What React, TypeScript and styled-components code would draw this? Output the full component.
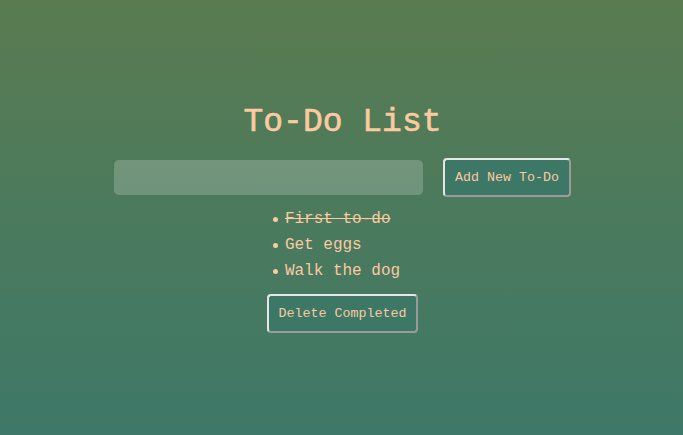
import React, { useState } from "react";
import styled, { createGlobalStyle } from "styled-components";

const MONO = `"Liberation Mono", "Courier New", monospace`;

const Global = createGlobalStyle`
  html, body { margin: 0; padding: 0; height: 100%; }
  body {
    background: linear-gradient(to bottom, #5a7b50 0%, #4b7a5d 50%, #3e7868 100%);
    font-family: ${MONO};
    color: #fbcaa0;
  }
  #root { min-height: 100%; }
`;

const Page = styled.div`
  display: flex;
  flex-direction: column;
  align-items: center;
  padding: 105px 0 0 2px;
  height: 435px;
  box-sizing: border-box;
`;

const Title = styled.h1`
  margin: 0;
  font-family: ${MONO};
  font-size: 33px;
  line-height: 36px;
  font-weight: normal;
  -webkit-text-stroke: 0.6px #fbcaa0;
  color: #fbcaa0;
`;

const Row = styled.div`
  display: flex;
  align-items: center;
  gap: 20px;
  margin-top: 17px;
`;

const Input = styled.input`
  width: 309px;
  height: 35px;
  box-sizing: border-box;
  border: none;
  border-radius: 5px;
  background: rgba(255, 255, 255, 0.2);
  padding: 0 10px;
  font-family: ${MONO};
  font-size: 16px;
  color: #fbcaa0;
  caret-color: #fbcaa0;
  outline: none;
`;

const Button = styled.button`
  box-sizing: border-box;
  height: 39px;
  padding: 0 10px;
  background: #3d7766;
  border: 2px solid;
  border-color: #e6e6e6 #9a9a9a #9a9a9a #e6e6e6;
  border-radius: 4px;
  font-family: ${MONO};
  font-size: 13.33px;
  color: #fbcaa0;
  cursor: pointer;
`;

const List = styled.ul`
  margin: 9px 0 0 0;
  padding: 0;
  list-style: none;
  width: fit-content;
`;

const Item = styled.li<{ $done?: boolean }>`
  position: relative;
  font-size: 16px;
  line-height: 26px;
  color: #fbcaa0;
  text-decoration: ${(p) => (p.$done ? "line-through" : "none")};

  &::before {
    content: "";
    position: absolute;
    left: -12px;
    top: 11px;
    width: 5px;
    height: 5px;
    border-radius: 50%;
    background: #fbcaa0;
  }
`;

const DeleteRow = styled.div`
  margin-top: 10px;
`;

export default function App() {
  const [text, setText] = useState("");
  const items = [
    { label: "First to-do", done: true },
    { label: "Get eggs", done: false },
    { label: "Walk the dog", done: false },
  ];
  return (
    <>
      <Global />
      <Page>
        <Title>To-Do List</Title>
        <Row>
          <Input autoFocus value={text} onChange={(e) => setText(e.target.value)} />
          <Button>Add New To-Do</Button>
        </Row>
        <List>
          {items.map((it) => (
            <Item key={it.label} $done={it.done}>
              {it.label}
            </Item>
          ))}
        </List>
        <DeleteRow>
          <Button>Delete Completed</Button>
        </DeleteRow>
      </Page>
    </>
  );
}
